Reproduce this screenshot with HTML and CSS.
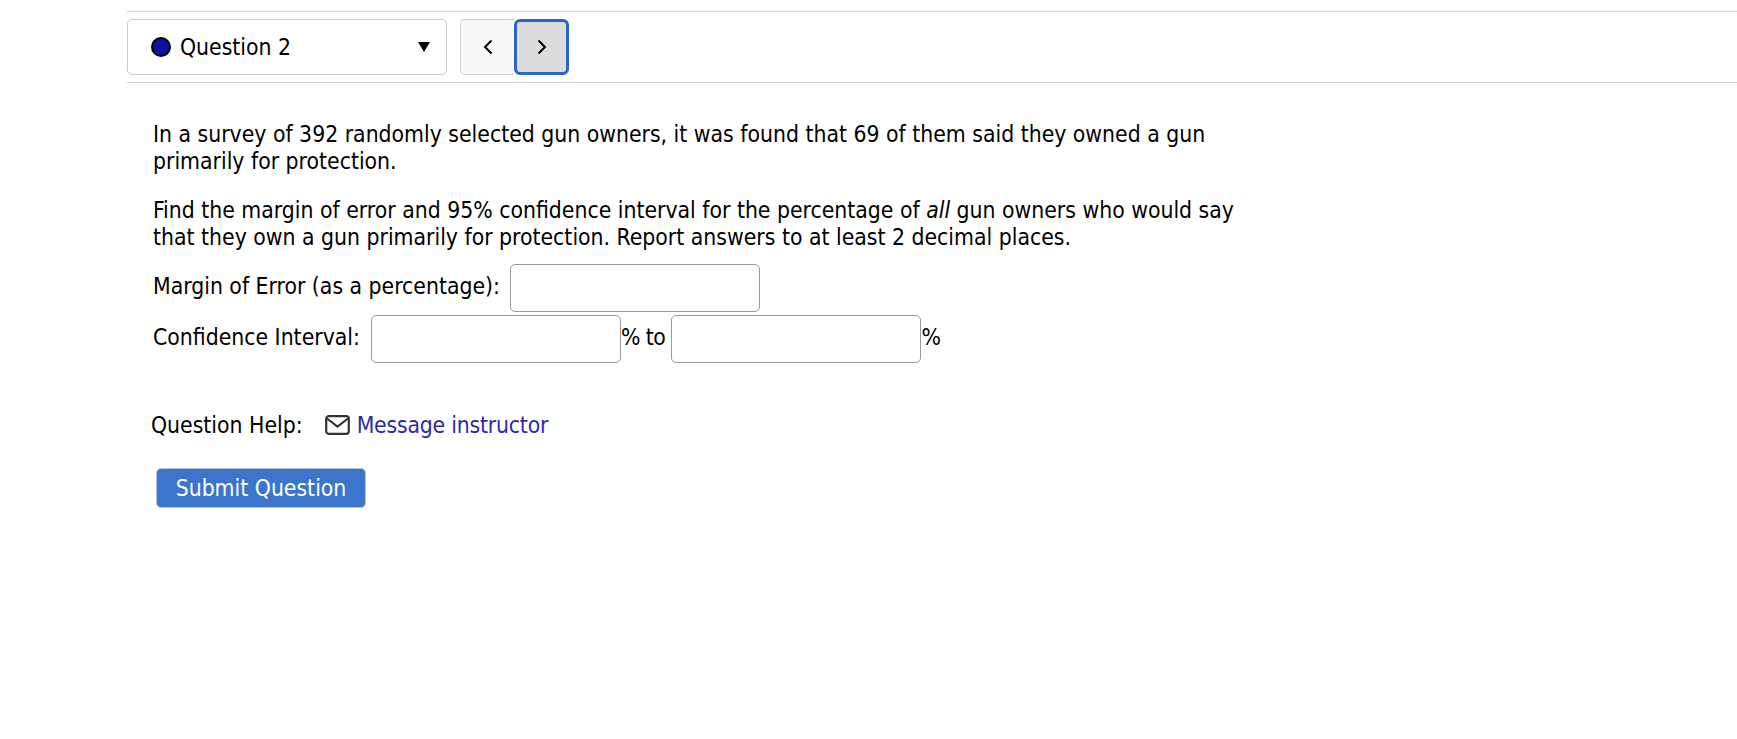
FILE: index.html
```html
<!DOCTYPE html>
<html lang="en">
<head>
<meta charset="utf-8">
<title>Question 2</title>
<link rel="stylesheet" href="styles.css">
</head>
<body>
<div class="page">
  <nav class="navbar">
    <div class="select">
      <span class="dot"></span>
      <span class="select-label">Question 2</span>
      <span class="caret"></span>
    </div>
    <div class="pager">
      <button class="page-btn prev" type="button" aria-label="Previous">
        <svg width="12" height="18" viewBox="0 0 12 18"><path d="M9.5 2.5 3 9l6.5 6.5" fill="none" stroke="#000" stroke-width="2"/></svg>
      </button>
      <button class="page-btn next" type="button" aria-label="Next">
        <svg width="12" height="18" viewBox="0 0 12 18"><path d="M2.5 2.5 9 9l-6.5 6.5" fill="none" stroke="#000" stroke-width="2"/></svg>
      </button>
    </div>
  </nav>
  <main class="question">
    <p class="para">In a survey of 392 randomly selected gun owners, it was found that 69 of them said they owned a gun primarily for protection.</p>
    <p class="para">Find the margin of error and 95% confidence interval for the percentage of <em>all</em> gun owners who would say that they own a gun primarily for protection. Report answers to at least 2 decimal places.</p>
    <div class="row row-first"><span class="label">Margin of Error (as a percentage):</span><input class="field" type="text"></div>
    <div class="row"><span class="label label-ci">Confidence Interval:</span><input class="field" type="text"><span class="pct">% to</span><input class="field" type="text"><span class="pct-end">%</span></div>
  </main>
  <div class="help">
    <span class="help-label">Question Help:</span>
    <svg class="mail" width="25" height="20" viewBox="0 0 25 20"><rect x="1.2" y="1.2" width="22.6" height="17.6" rx="2.5" fill="none" stroke="#333" stroke-width="2.2"/><path d="M2 3.5l10.5 8L23 3.5" fill="none" stroke="#333" stroke-width="2.2"/></svg>
    <a class="help-link" href="#">Message instructor</a>
  </div>
  <button class="submit" type="button">Submit Question</button>
</div>
</body>
</html>
```
FILE: styles.css
```css
* { box-sizing: border-box; }
html, body { margin: 0; background: #fff; }
body { font-family: "DejaVu Sans", sans-serif; font-stretch: condensed; font-size: 22.75px; line-height: 27px; color: #000; }
.page { padding: 11px 0 0 127px; height: 739px; overflow: hidden; }
.navbar { display: flex; align-items: center; gap: 13px; height: 72px; border-top: 1px solid #d2d2d2; border-bottom: 1px solid #d2d2d2; }
.select { width: 320px; height: 56px; display: flex; align-items: center; padding: 0 16px 0 23px; border: 1px solid #ccc; border-radius: 5px; background: #fff; }
.dot { width: 20px; height: 20px; border-radius: 50%; background: #0a14a0; border: 2px solid #000; margin-right: 9px; }
.select-label { flex: 1; }
.caret { width: 0; height: 0; border-left: 6.5px solid transparent; border-right: 6.5px solid transparent; border-top: 10px solid #000; }
.pager { display: flex; height: 56px; }
.page-btn { height: 56px; padding: 0; display: flex; align-items: center; justify-content: center; }
.prev { width: 54px; background: #f8f8f8; border: 1px solid #ccc; border-right: 0; border-radius: 5px 0 0 5px; }
.next { width: 55px; background: #dcdcdc; border: 3px solid #2a66c8; border-radius: 6px; }
.question { width: 1130px; padding: 38px 0 0 26px; }
.para { margin: 0 0 22px; }
.row { display: flex; align-items: center; height: 48px; margin-bottom: 3px; }
.row-first { margin-top: -9px; }
.label { margin-right: 10px; padding-bottom: 3px; }
.label-ci { margin-right: 11px; }
.field { width: 250px; height: 48px; border: 1px solid #999; border-radius: 5px; background: #fff; padding: 0; flex: none; }
.pct { margin-right: 6px; padding-bottom: 3px; letter-spacing: -0.5px; }
.pct-end { padding-bottom: 3px; letter-spacing: -1px; }
.help { display: flex; align-items: center; margin: 47px 0 0 24px; height: 30px; }
.help-label { margin-right: 22px; }
.mail { margin-right: 7px; }
.help-link { color: #2a2aa8; text-decoration: none; letter-spacing: -0.2px; }
.submit { display: block; margin: 28px 0 0 29px; width: 210px; height: 40px; background: #3b76cc; color: #fff; font: inherit; border: 1px solid #b9c6d8; border-radius: 5px; padding: 0; }
```
